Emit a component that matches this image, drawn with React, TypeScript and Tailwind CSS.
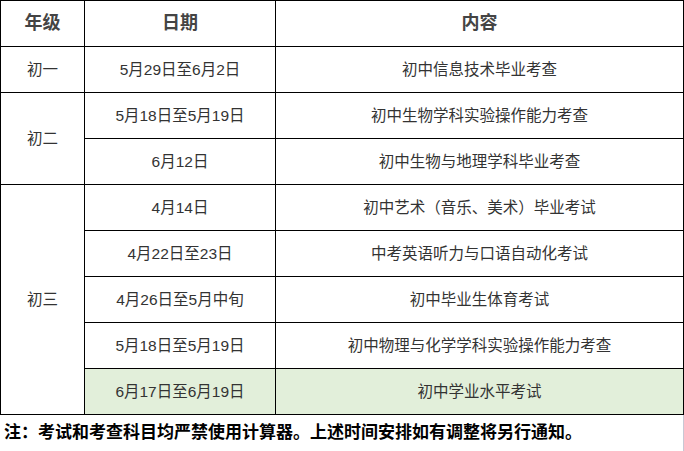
import React from 'react';

type Row = { grade?: string; span?: number; date: string; content: string; highlight?: boolean };

const rows: Row[] = [
  { grade: '初一', span: 1, date: '5月29日至6月2日', content: '初中信息技术毕业考查' },
  { grade: '初二', span: 2, date: '5月18日至5月19日', content: '初中生物学科实验操作能力考查' },
  { date: '6月12日', content: '初中生物与地理学科毕业考查' },
  { grade: '初三', span: 5, date: '4月14日', content: '初中艺术（音乐、美术）毕业考试' },
  { date: '4月22日至23日', content: '中考英语听力与口语自动化考试' },
  { date: '4月26日至5月中旬', content: '初中毕业生体育考试' },
  { date: '5月18日至5月19日', content: '初中物理与化学学科实验操作能力考查' },
  { date: '6月17日至6月19日', content: '初中学业水平考试', highlight: true },
];

const cell = 'border border-black text-center align-middle p-0';

export default function App() {
  return (
    <div
      className="w-[684px] h-[451px] bg-white text-[#333]"
      style={{ fontFamily: '"Liberation Sans", "Noto Sans CJK SC", sans-serif' }}
    >
      <table className="w-[684px] border-collapse table-fixed">
        <colgroup>
          <col className="w-[84px]" />
          <col className="w-[191px]" />
          <col />
        </colgroup>
        <thead>
          <tr className="h-[46px] text-[18px] font-bold text-[#444]">
            <th className={cell}>年级</th>
            <th className={cell}>日期</th>
            <th className={cell}>内容</th>
          </tr>
        </thead>
        <tbody className="text-[15.5px]">
          {rows.map((r, i) => (
            <tr key={i} className={`h-[46px] ${r.highlight ? 'bg-[#e2efda]' : ''}`}>
              {r.grade && (
                <td className={`${cell} bg-white`} rowSpan={r.span}>
                  {r.grade}
                </td>
              )}
              <td className={cell}>{r.date}</td>
              <td className={cell}>{r.content}</td>
            </tr>
          ))}
        </tbody>
      </table>
      <div className="h-[37px] border-r border-b border-[#c8c8d4] flex items-center pl-[4px] text-[17px] font-bold text-black">
        注：考试和考查科目均严禁使用计算器。上述时间安排如有调整将另行通知。
      </div>
    </div>
  );
}
